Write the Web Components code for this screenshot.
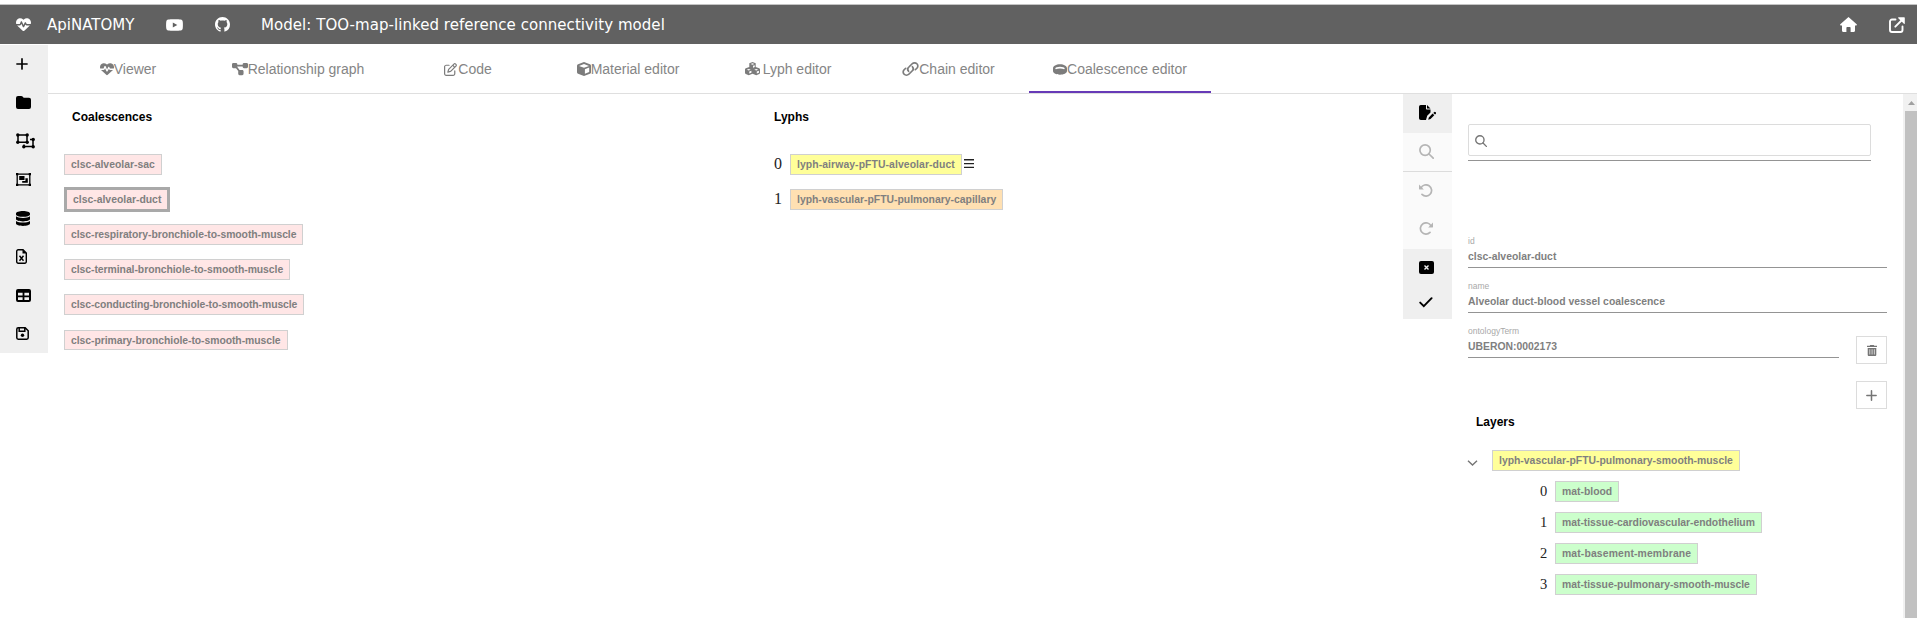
<!DOCTYPE html>
<html lang="en">
<head>
<meta charset="utf-8">
<title>ApiNATOMY</title>
<style>
html,body{margin:0;height:100%;overflow:hidden;background:#fff}
body{font-family:"Liberation Sans",Arial,sans-serif}
</style>
</head>
<body>
<api-app></api-app>
<script>
const ICONS = {
  heart:['0 0 512 512','<path d="M228.3 469.1L47.6 300.4c-4.2-3.9-8.2-8.1-11.9-12.4h87c22.6 0 43-13.6 51.7-34.5l10.5-25.2 49.3 109.5c3.8 8.5 12.1 14 21.4 14.1s17.8-5 22-13.3L320 253.7l1.7 3.4c9.5 19 28.9 31 50.1 31H476.3c-3.7 4.3-7.7 8.5-11.9 12.4L283.7 469.1c-7.5 7-17.4 10.9-27.7 10.9s-20.2-3.9-27.7-10.9zM503.7 240h-132c-3 0-5.8-1.7-7.2-4.4l-23.2-46.3c-4.1-8.1-12.4-13.3-21.5-13.3s-17.4 5.1-21.5 13.3l-41.4 82.8L205.9 158.2c-3.9-8.7-12.7-14.3-22.2-14.1s-18.1 5.9-21.8 14.8l-31.8 76.3c-1.2 3-4.2 4.9-7.4 4.9H8.7C3 225.2 0 208.2 0 190.9v-5.8c0-69.9 50.5-129.5 119.4-141C165 36.5 211.4 51.4 244 84l12 12 12-12c32.6-32.6 79-47.5 124.6-39.9C461.5 55.6 512 115.2 512 185.1v5.8c0 16.9-2.8 33.5-8.3 49.1z"/>'],
  youtube:['0 0 17 13','<path fill-rule="evenodd" d="M2.2.5C4 .1 13 .1 14.800.5 16 .8 16.500 1.500 16.700 2.600c.3 1.800.3 6 0 7.800-.2 1.100-.7 1.800-1.900 2.100-1.800.4-10.800.4-12.600 0C1 12.200.5 11.500.3 10.400 0 8.600 0 4.400.3 2.600.5 1.500 1 .8 2.200.5zM6.800 3.900v5.200l4.500-2.600z"/>'],
  github:['0 0 16 16','<path d="M8 0C3.58 0 0 3.58 0 8c0 3.54 2.29 6.53 5.47 7.59.4.07.55-.17.55-.38 0-.19-.01-.82-.01-1.49-2.01.37-2.53-.49-2.69-.94-.09-.23-.48-.94-.82-1.13-.28-.15-.68-.52-.01-.53.63-.01 1.08.58 1.23.82.72 1.21 1.87.87 2.33.66.07-.52.28-.87.51-1.07-1.78-.2-3.64-.89-3.64-3.95 0-.87.31-1.59.82-2.15-.08-.2-.36-1.02.08-2.12 0 0 .67-.21 2.2.82.64-.18 1.32-.27 2-.27s1.36.09 2 .27c1.53-1.04 2.2-.82 2.2-.82.44 1.1.16 1.92.08 2.12.51.56.82 1.27.82 2.15 0 3.07-1.87 3.75-3.65 3.95.29.25.54.73.54 1.48 0 1.07-.01 1.93-.01 2.2 0 .21.15.46.55.38A8.01 8.01 0 0 0 16 8c0-4.42-3.58-8-8-8z"/>'],
  home:['0 0 17 15','<path d="M8.500.1.3 7.300C-.1 7.700.1 8.500.8 8.500H2v5.300c0 .7.5 1.200 1.200 1.200H6.400v-4.200c0-.5.400-.8.800-.8h2.600c.5 0 .8.400.8.800V15h3.200c.7 0 1.200-.5 1.200-1.200V8.500h1.200c.7 0 .9-.8.500-1.200z"/>'],
  external:['0 0 16 16','<path d="M6.500 2.500H3A2 2 0 0 0 1 4.500V13a2 2 0 0 0 2 2h8.500a2 2 0 0 0 2-2V9.500M6.300 9.700 13.500 2.500" fill="none" stroke="currentColor" stroke-width="1.9" stroke-linecap="round"/><path d="M9.700.3h5.500c.4 0 .6.200.6.600v5.500c0 .5-.5.700-.9.400L9.300 1.200C9 .9 9.200.3 9.700.3z"/>'],
  plus:['0 0 13 13','<path d="M6.500 1v11M1 6.500h11" fill="none" stroke="currentColor" stroke-width="1.800" stroke-linecap="round"/>'],
  folder:['0 0 15 13','<path d="M2 0h3.200c.6 0 1.100.2 1.400.6l.8.8c.3.300.6.400 1 .4H13a2 2 0 0 1 2 2V11a2 2 0 0 1-2 2H2a2 2 0 0 1-2-2V2a2 2 0 0 1 2-2z"/>'],
  ungroup:['0 0 19 16','<g fill="none" stroke="currentColor" stroke-width="1.500"><path d="M2 2h9v7.300H2zM14 6.500h3v7H8v-2"/></g><g><circle cx="1.800" cy="2" r="1.700"/><circle cx="11.200" cy="2" r="1.700"/><circle cx="1.800" cy="9.300" r="1.700"/><circle cx="11.200" cy="9.300" r="1.700"/><circle cx="17.200" cy="6.500" r="1.700"/><circle cx="17.200" cy="13.700" r="1.700"/><circle cx="7.800" cy="13.700" r="1.700"/></g>'],
  group:['0 0 15 13','<path d="M1.200 1.200h12.600v10.600H1.200z" fill="none" stroke="currentColor" stroke-width="1.300"/><path d="M0 0h2.300v2.300H0zM12.700 0H15v2.300h-2.300zM0 10.700h2.300V13H0zM12.700 10.700H15V13h-2.300zM3.200 3h5.300v4H3.200zM9.400 5.300h2.400v4.500H6.200V7.900h3.200z"/>'],
  database:['0 0 14 15','<path d="M14 2.400v1C14 4.700 10.900 5.800 7 5.800S0 4.700 0 3.400v-1C0 1.100 3.100 0 7 0s7 1.100 7 2.400zM0 5.300c1.500 1 4 1.600 7 1.600s5.500-.6 7-1.600v2.800c0 1.300-3.100 2.300-7 2.300S0 9.400 0 8.100zM0 9.900c1.500 1 4 1.600 7 1.600s5.500-.6 7-1.600v2.700C14 13.900 10.900 15 7 15s-7-1.100-7-2.400z"/>'],
  excel:['0 0 11 15','<path d="M7 .7H2.200A1.500 1.500 0 0 0 .7 2.200v10.600a1.500 1.500 0 0 0 1.500 1.500h6.600a1.500 1.500 0 0 0 1.500-1.500V4z" fill="none" stroke="currentColor" stroke-width="1.400"/><path d="M6.500.7V4.600h4z"/><path d="M3.500 6.800l4 5M7.500 6.800l-4 5" fill="none" stroke="currentColor" stroke-width="1.400"/>'],
  table:['0 0 15 13','<path fill-rule="evenodd" d="M2 0h11a2 2 0 0 1 2 2v9a2 2 0 0 1-2 2H2a2 2 0 0 1-2-2V2a2 2 0 0 1 2-2zM2 3.800v2.700h4.600V3.800zM8.400 3.800v2.700H13V3.800zM2 8.300V11h4.600V8.300zM8.400 8.300V11H13V8.300z"/>'],
  save:['0 0 13 13','<path d="M2.200.8h7L12.200 3.800v7a1.400 1.400 0 0 1-1.400 1.400H2.200A1.400 1.400 0 0 1 .8 10.800V2.200A1.400 1.400 0 0 1 2.200.8zM3.200 1v3.300h5.600V1" fill="none" stroke="currentColor" stroke-width="1.500"/><circle cx="6.500" cy="8.300" r="1.700"/>'],
  diagram:['0 0 576 512','<path d="M0 80C0 53.5 21.5 32 48 32h96c26.5 0 48 21.5 48 48V96H384V80c0-26.5 21.5-48 48-48h96c26.5 0 48 21.5 48 48v96c0 26.5-21.5 48-48 48H432c-26.5 0-48-21.5-48-48V160H192v16c0 1.7-.1 3.4-.3 5L272 288h96c26.5 0 48 21.5 48 48v96c0 26.5-21.5 48-48 48H272c-26.5 0-48-21.5-48-48V336c0-1.7 .1-3.4 .3-5L144 224H48c-26.5 0-48-21.5-48-48V80z"/>'],
  edit:['0 0 512 512','<path d="M441 58.9L453.1 71c9.4 9.4 9.4 24.6 0 33.9L424 134.1 377.9 88 407 58.9c9.4-9.4 24.6-9.4 33.9 0zM209.8 256.2L344 121.9 390.1 168 255.8 302.2c-2.9 2.9-6.5 5-10.4 6.1l-58.5 16.700 16.700-58.5c1.100-3.900 3.200-7.500 6.100-10.400zM373.1 25L175.8 222.2c-8.700 8.700-15 19.400-18.300 31.100l-28.6 100c-2.400 8.400-.1 17.400 6.100 23.600s15.200 8.500 23.600 6.100l100-28.600c11.800-3.400 22.500-9.700 31.100-18.300L487 138.900c28.100-28.100 28.100-73.700 0-101.800L474.900 25C446.800-3.100 401.200-3.100 373.100 25zM88 64C39.400 64 0 103.400 0 152V424c0 48.600 39.400 88 88 88H360c48.600 0 88-39.400 88-88V312c0-13.300-10.700-24-24-24s-24 10.700-24 24V424c0 22.100-17.900 40-40 40H88c-22.100 0-40-17.900-40-40V152c0-22.100 17.900-40 40-40H200c13.300 0 24-10.700 24-24s-10.700-24-24-24H88z"/>'],
  cube:['0 0 14 14','<path fill-rule="evenodd" d="M6.300.2a2 2 0 0 1 1.400 0l5.200 2c.7.300 1.100.8 1.100 1.500v6.600c0 .7-.4 1.300-1.100 1.500l-5.200 2a2 2 0 0 1-1.400 0l-5.200-2C.4 11.500 0 11 0 10.300V3.700C0 3 .4 2.500 1.100 2.200zM7 2 2 3.900l5 1.900 5-1.900zM7.900 11.800l4.300-1.700V5.600L7.900 7.300z"/>'],
  cubes:['0 0 14 14','<path fill-rule="evenodd" d="M7 0l3 1.200v3.700l3.300 1.300c.4.200.7.500.7 1v3.900c0 .4-.3.800-.7 1L10.500 13.300 7 11.800 3.500 13.300.7 12.100c-.4-.2-.7-.6-.7-1V7.200c0-.5.3-.8.700-1L4 4.900V1.200zM7 1.300 5.200 2 7 2.700 8.800 2zM7.500 5.700l1.600-.6V3.200l-1.600.6zM3.500 7.100l-1.800.7 1.800.7 1.800-.7zM4 11.600l2-.8V8.700l-2 .8zM10.500 7.100l-1.800.7 1.800.7 1.800-.7zM11 11.600l2-.8V8.700l-2 .8z"/>'],
  link:['0 0 16 14','<g fill="none" stroke="currentColor" stroke-width="1.600" stroke-linecap="round"><path d="M6.200 9.300A3.100 3.100 0 0 1 6.500 5L9.600 1.800A3.100 3.100 0 0 1 14 6.200L12.500 7.700"/><path d="M9.800 4.700A3.100 3.100 0 0 1 9.500 9L6.400 12.200A3.100 3.100 0 0 1 2 7.800L3.500 6.300"/></g>'],
  ring:['0 0 14 12','<path fill-rule="evenodd" d="M7 .4c3.900 0 7 1.900 7 4.600v2.700C14 10 10.900 11.700 7 11.700S0 10 0 7.700V5C0 2.300 3.100.4 7 .4zM7 3c-2.600 0-4.700.8-4.700 1.900 0 .4.200.7.600.9C4 5.200 5.400 4.900 7 4.900s3 .3 4.100.9c.4-.2.600-.5.600-.9C11.700 3.800 9.600 3 7 3z"/>'],
  filepen:['0 0 17 15','<path d="M1.800 0H7v3.500c0 .6.400 1 1 1h3.500V7.500L8.200 10.800 7 15H1.800A1.800 1.800 0 0 1 0 13.200V1.800A1.800 1.800 0 0 1 1.800 0zM8 0l3.500 3.500H8zM15 7.200a1.200 1.200 0 0 1 1.700 1.700l-.7.700-1.700-1.700zM13.600 8.600l1.700 1.700-3.800 3.800-2.300.7.600-2.400z"/>'],
  search:['0 0 15 15','<g fill="none" stroke="currentColor" stroke-width="1.700" stroke-linecap="round"><circle cx="6.100" cy="6.100" r="5.200"/><path d="M10 10l4.200 4.200"/></g>'],
  undo:['0 0 14 13','<path d="M2 3.900A5.600 5.600 0 1 1 3 10.400" fill="none" stroke="currentColor" stroke-width="1.700" stroke-linecap="round"/><path d="M0 .6v4.300c0 .3.200.5.500.5h4.300z"/>'],
  xbox:['0 0 15 13','<path fill-rule="evenodd" d="M2 0h11a2 2 0 0 1 2 2v9a2 2 0 0 1-2 2H2a2 2 0 0 1-2-2V2a2 2 0 0 1 2-2z"/><path d="M5.500 4.500l4 4M9.500 4.500l-4 4" stroke="#efefef" stroke-width="1.400" fill="none"/>'],
  check:['0 0 14 11','<path d="M1.200 5.600 4.800 9.200 12.600 1.200" fill="none" stroke="currentColor" stroke-width="1.900" stroke-linecap="round"/>'],
  bars:['0 0 10 9','<path d="M0 .8h10M0 4.600h10M0 8.400h10" fill="none" stroke="currentColor" stroke-width="1.400"/>'],
  trash:['0 0 10 11','<path fill-rule="evenodd" d="M3.200 0h3.600l.5.800H10v1.300H0V.8h2.700zM.7 2.900h8.600V9.700c0 .7-.5 1.300-1.200 1.300H1.900C1.200 11 .7 10.400.7 9.700zM2.500 4.200v5.300h.7V4.200zM4.700 4.200v5.300h.7V4.200zM6.900 4.200v5.300h.7V4.200z"/>'],
  chevron:['0 0 11 6','<path d="M1 .8l4.500 4.200L10 .8" fill="none" stroke="currentColor" stroke-width="1.400"/>'],
  up:['0 0 8 4','<path d="M4 0l4 4H0z"/>']
};
// Creates an element class whose shadow root holds the given styles and markup.
const define = (name, css, html) => customElements.define(name, class extends HTMLElement {
  connectedCallback() {
    if (this.shadowRoot) return;
    const attr = (k, d = '') => this.getAttribute(k) ?? d;
    this.attachShadow({mode:'open'}).innerHTML = `<style>*{box-sizing:border-box}${typeof css==='function'?css(attr):css}</style>${typeof html==='function'?html(attr):html}`;
  }
});
const icon = (n, w, h, extra='') => `<ui-icon name="${n}" w="${w}" h="${h}" ${extra}></ui-icon>`;

define('ui-icon',
  a => `:host{display:block;flex:none;width:${a('w')}px;height:${a('h')}px}svg{display:block;width:100%;height:100%}`,
  a => `<svg viewBox="${ICONS[a('name')][0]}" preserveAspectRatio="none" fill="currentColor">${ICONS[a('name')][1]}</svg>`);

define('top-bar',
  `:host{display:flex;align-items:center;height:41px;margin-top:4px;background:#616161;border-top:1px solid #c4c4c4;border-bottom:1px solid #fff;color:#fff;font:15px "DejaVu Sans",Verdana,sans-serif;padding:0 12px 0 16px;white-space:nowrap}
  .n{margin-left:16px;width:119px}.g{margin-left:32px}.m{margin-left:31px;flex:1;letter-spacing:.05px}.e{margin-left:32px}`,
  `${icon('heart',15,15)}<span class="n">ApiNATOMY</span>${icon('youtube',17,12)}${icon('github',15,15,'class="g"')}<span class="m">Model: TOO-map-linked reference connectivity model</span>${icon('home',17,15)}${icon('external',16,16,'class="e"')}`);

define('side-bar',
  `:host{display:block;width:48px;height:308px;background:#efefef;color:#000;flex:none}div{height:38.500px;display:flex;align-items:center;padding-left:16px}`,
  [['plus',12,12],['folder',15,13],['ungroup',19,16],['group',15,13],['database',14,15],['excel',11,15],['table',15,13],['save',13,13]].map(i=>`<div>${icon(...i)}</div>`).join(''));

define('nav-tab',
  a => `:host{display:flex;align-items:center;justify-content:center;flex:none;width:${a('w')}px;height:48px;padding-top:2px;border-bottom:2px solid ${a('on')?'#673ab7':'transparent'};color:#7c7c7c;font-size:14px;white-space:nowrap}span{padding-left:${a('gap','0')}px;color:#858585}`,
  a => `${icon(a('icon'),a('iw'),a('ih'))}<span><slot></slot></span>`);

define('tab-strip',
  `:host{display:flex;height:49px;border-bottom:1px solid #dfdfdf}`,
  `<nav-tab w="160" icon="heart" iw="14" ih="14">Viewer</nav-tab><nav-tab w="180" icon="diagram" iw="16" ih="14">Relationship graph</nav-tab><nav-tab w="160" icon="edit" iw="13" ih="13" gap="1">Code</nav-tab><nav-tab w="160" icon="cube" iw="14" ih="14">Material editor</nav-tab><nav-tab w="160" icon="cubes" iw="15" ih="14" gap="3">Lyph editor</nav-tab><nav-tab w="161" icon="link" iw="17" ih="14">Chain editor</nav-tab><nav-tab w="182" icon="ring" iw="14" ih="11">Coalescence editor</nav-tab>`.replace('ih="11"','ih="11" on="1"'));

define('res-chip',
  a => `:host{display:block;flex:none;font-weight:bold;font-size:10.400px;line-height:17.600px;letter-spacing:${a('ls','0')}px;color:#7f7f7f;white-space:nowrap;padding:1px 6px 0;border:1px solid #d0d0d0;background:${({pink:'#ffe6e6',yellow:'#ffff99',orange:'#ffe0b2',green:'#ccffcc'})[a('tone')]}}:host([selected]){border:3px solid #a9a9a9;line-height:18px}`,
  `<slot></slot>`);

define('chip-row',
  a => `:host{display:flex;align-items:center;height:${a('h','35.1')}px;color:#222}b{font:${a('size','16')}px "Liberation Serif","Times New Roman",serif;width:${a('nw','16')}px}ui-icon{margin:-2px 0 0 2px;color:#222}`,
  a => `${a('n')?`<b>${a('n')}</b>`:''}<slot></slot>${a('menu')?icon('bars',10,9):''}`);

define('chip-column',
  `:host{display:block;flex:none}h2{margin:0 0 22.800px 0;padding-left:var(--indent,0);font-size:12px;line-height:14px;color:#000;padding-top:16px}`,
  a => `<h2>${a('title')}</h2><slot></slot>`);

define('tool-strip',
  `:host{display:flex;flex-direction:column;width:49px;flex:none;color:#000}div{display:flex;align-items:center;padding-left:16px;background:#efefef}.o{background:#fafafa;color:#b5b5b5}.f ui-icon{transform:scaleX(-1)}`,
  `<div style="height:39px;padding-bottom:2px">${icon('filepen',17,15)}</div><div class="o" style="height:39px;padding-bottom:2px;border-bottom:1px solid #dcdcdc">${icon('search',15,15)}</div><div class="o" style="height:38px;padding-bottom:1px">${icon('undo',14,13)}</div><div class="o f" style="height:39px;padding-bottom:2px">${icon('undo',14,13)}</div><div style="height:38px;padding-bottom:1px">${icon('xbox',15,13)}</div><div style="height:32px;padding-bottom:1px">${icon('check',14,11)}</div>`);

define('search-box',
  `:host{display:block;width:403px;height:37px;border-bottom:1px solid #949494;color:#757575}div{height:32px;border:1px solid #dcdcdc;border-radius:2px;display:flex;align-items:center;padding:2px 0 0 6px}`,
  `<div>${icon('search',12,12)}</div>`);

define('text-field',
  a => `:host{display:flex;flex-direction:column;box-sizing:border-box;width:${a('w','419')}px;height:45px;border-bottom:1px solid #949494;justify-content:flex-end;white-space:nowrap;flex:none}small{font-size:8.500px;line-height:10px;color:#a9a9a9}span{font-weight:bold;font-size:10.400px;line-height:14px;color:#7f7f7f;padding:4px 0 3px}`,
  a => `<small>${a('label')}</small><span><slot></slot></span>`);

define('square-button',
  `:host{display:flex;align-items:center;justify-content:center;box-sizing:border-box;width:31px;height:28px;border:1px solid #dcdcdc;color:#757575;flex:none}`,
  a => icon(a('icon'),a('iw'),a('ih')));

define('scroll-bar',
  `:host{display:flex;flex-direction:column;width:14px;flex:none;background:#f1f1f1;padding-left:2px;color:#a0a0a0;box-sizing:border-box}div{height:17px;padding:7px 0 0 3px}i{flex:1;background:#c1c1c1}`,
  `<div>${icon('up',7,4)}</div><i></i>`);

define('detail-panel',
  `:host{display:block;flex:1;padding:30px 0 0 16px}.fields{margin-top:62px}.term{display:flex;justify-content:space-between;align-items:flex-start}.term square-button{margin-top:23px}.add{margin:17px 0 0 388px}.w{width:419px}
  h2{margin:6px 0 0 8px;font-size:12px;line-height:14px;color:#000}.root{display:flex;align-items:center;height:31px;margin-top:16px;color:#757575}.root ui-icon{margin:4px 14px 0 -1px}.kids{padding-left:72px}`,
  `<search-box></search-box><div class="fields w"><text-field label="id">clsc-alveolar-duct</text-field><text-field label="name">Alveolar duct-blood vessel coalescence</text-field><div class="term"><text-field w="371" label="ontologyTerm">UBERON:0002173</text-field><square-button icon="trash" iw="10" ih="11"></square-button></div></div>
  <square-button class="add" icon="plus" iw="11" ih="11"></square-button>
  <h2>Layers</h2><div class="root">${icon('chevron',11,6)}<res-chip tone="yellow">lyph-vascular-pFTU-pulmonary-smooth-muscle</res-chip></div>
  <div class="kids">${[['mat-blood',0],['mat-tissue-cardiovascular-endothelium',-.03],['mat-basement-membrane',.13],['mat-tissue-pulmonary-smooth-muscle',-.03]].map(([t,ls],i)=>`<chip-row h="31" size="14.5" nw="15" n="${i}"><res-chip tone="green" ls="${ls}">${t}</res-chip></chip-row>`).join('')}</div>`);

define('api-app',
  `:host{display:flex;flex-direction:column;width:1917px;height:618px;overflow:hidden}.body{display:flex;flex:1;min-height:0}.main{flex:1;display:flex;flex-direction:column;min-width:0}.work{display:flex;flex:1;min-height:0}.c1{width:710px;padding-left:16px;--indent:8px}.c2{width:645px;padding-left:16px}`,
  `<top-bar></top-bar><div class="body"><side-bar></side-bar><div class="main"><tab-strip></tab-strip><div class="work">
  <chip-column class="c1" title="Coalescences">${['clsc-alveolar-sac','clsc-alveolar-duct','clsc-respiratory-bronchiole-to-smooth-muscle','clsc-terminal-bronchiole-to-smooth-muscle','clsc-conducting-bronchiole-to-smooth-muscle','clsc-primary-bronchiole-to-smooth-muscle'].map((t,i)=>`<chip-row><res-chip tone="pink" ls="${[0,0,-.06,-.05,-.08,-.06][i]}" ${i===1?'selected':''}>${t}</res-chip></chip-row>`).join('')}</chip-column>
  <chip-column class="c2" title="Lyphs"><chip-row n="0" menu="1"><res-chip tone="yellow" ls=".085">lyph-airway-pFTU-alveolar-duct</res-chip></chip-row><chip-row n="1"><res-chip tone="orange">lyph-vascular-pFTU-pulmonary-capillary</res-chip></chip-row></chip-column>
  <tool-strip></tool-strip><detail-panel></detail-panel><scroll-bar></scroll-bar></div></div></div>`);
</script>
</body>
</html>
